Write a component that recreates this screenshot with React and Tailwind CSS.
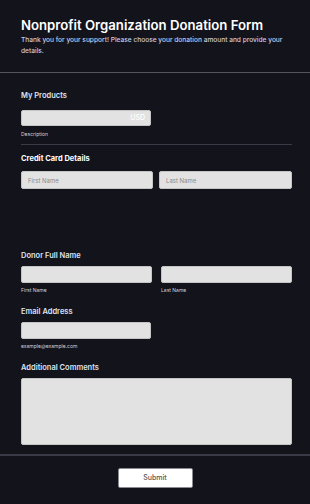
export default function App() {
  const font = { fontFamily: "Inter, 'Noto Sans', sans-serif" };
  return (
    <div className="min-h-[504px] w-[310px] bg-[#13131c] text-white" style={font}>
      <div className="border-b border-[#55555f] px-[21px] pt-[16px] pb-[15px]">
        <h1 className="text-[13.2px] font-semibold leading-[18px] text-white">
          Nonprofit Organization Donation Form
        </h1>
        <p className="mt-[1px] text-[6.6px] font-medium leading-[11px] text-[#c9cde0]">
          Thank you for your support! Please choose your donation amount and provide your details.
        </p>
      </div>

      <div className="pl-[21px] pr-[18px]">
        <div className="mt-[18px] text-[7.5px] font-semibold leading-[10px] text-[#dfe3f0]">My Products</div>
        <div className="mt-[9px] flex h-[16px] w-[130px] items-center justify-end rounded-[2px] border border-[#c4c4c4] bg-[#e2e2e2] pr-[5px]">
          <span className="text-[7px] font-medium text-white">USD</span>
        </div>
        <div className="mt-[5px] text-[5px] leading-[7px] text-[#d0d3de]">Description</div>
        <div className="mt-[6px] border-t border-[#3c3c48]" />

        <div className="mt-[9px] text-[7.5px] font-bold leading-[10px] text-white">Credit Card Details</div>
        <div className="mt-[7px] flex gap-[6px]">
          <div className="flex h-[18px] w-[132px] items-center rounded-[2px] border border-[#c4c4c4] bg-[#e2e2e2] pl-[6px] text-[6px] text-[#8a8a8a]">First Name</div>
          <div className="flex h-[18px] w-[133px] items-center rounded-[2px] border border-[#c4c4c4] bg-[#e2e2e2] pl-[6px] text-[6px] text-[#8a8a8a]">Last Name</div>
        </div>

        <div className="mt-[62px] text-[7.5px] font-semibold leading-[10px] text-[#dfe3f0]">Donor Full Name</div>
        <div className="mt-[5px] flex gap-[9px]">
          <div className="flex-1">
            <div className="h-[17px] rounded-[2px] border border-[#c4c4c4] bg-[#e2e2e2]" />
            <div className="mt-[4px] text-[5px] leading-[7px] text-[#d0d3de]">First Name</div>
          </div>
          <div className="flex-1">
            <div className="h-[17px] rounded-[2px] border border-[#c4c4c4] bg-[#e2e2e2]" />
            <div className="mt-[4px] text-[5px] leading-[7px] text-[#d0d3de]">Last Name</div>
          </div>
        </div>

        <div className="mt-[13px] text-[7.5px] font-semibold leading-[10px] text-[#dfe3f0]">Email Address</div>
        <div className="mt-[5px] h-[17px] w-[130px] rounded-[2px] border border-[#c4c4c4] bg-[#e2e2e2]" />
        <div className="mt-[4px] text-[5px] leading-[7px] text-[#d0d3de]">example@example.com</div>

        <div className="mt-[13px] text-[7.5px] font-semibold leading-[10px] text-[#dfe3f0]">Additional Comments</div>
        <div className="mt-[5px] h-[67px] rounded-[2px] border border-[#c4c4c4] bg-[#e2e2e2]" />
      </div>

      <div className="mt-[9px] border-t-2 border-[#3a3a46]" />
      <div className="flex justify-center pt-[12px]">
        <button className="flex h-[20px] w-[75px] items-center justify-center rounded-[2px] border border-[#8a8a94] bg-white text-[7px] font-medium text-[#555]">
          Submit
        </button>
      </div>
    </div>
  );
}
